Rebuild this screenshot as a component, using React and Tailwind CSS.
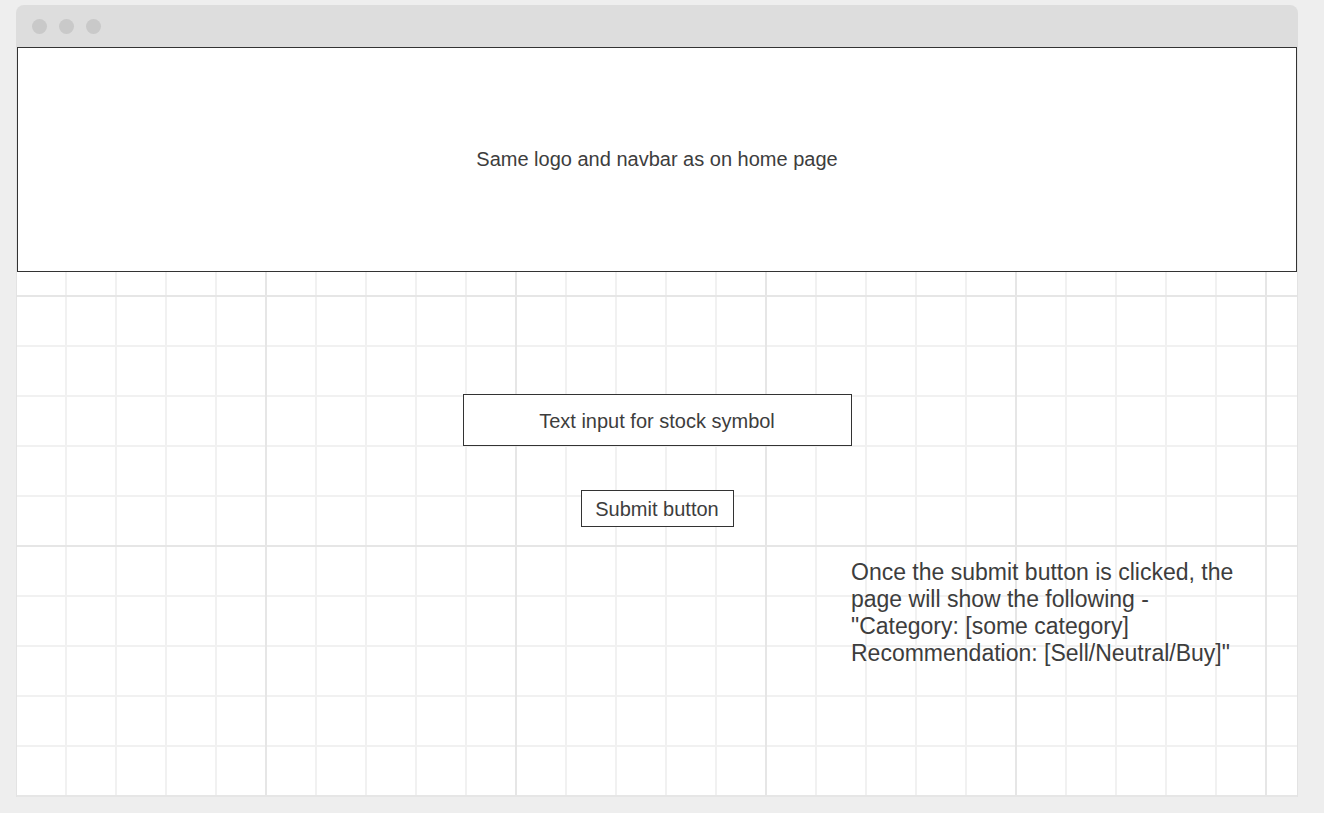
import React from "react";

const font = { fontFamily: '"Liberation Sans", Arial, sans-serif' };

export default function App() {
    return (
        <div className="min-h-[813px] w-full bg-[#eeeeee] pt-[5px] pl-[16px]" style={font}>
            <div className="w-[1282px] rounded-t-[8px] overflow-hidden">
                {/* title bar */}
                <div className="h-[42px] bg-[#dddddd] flex items-center gap-[12px] pl-[16px]">
                    <span className="w-[15px] h-[15px] rounded-full bg-[#c9c9c9]" />
                    <span className="w-[15px] h-[15px] rounded-full bg-[#c9c9c9]" />
                    <span className="w-[15px] h-[15px] rounded-full bg-[#c9c9c9]" />
                </div>

                {/* page canvas */}
                <div className="border-x border-[#e3e3e3] bg-white h-[750px] [background-image:linear-gradient(to_right,transparent_248px,#e6e6e6_248px,#e6e6e6_250px),linear-gradient(to_bottom,transparent_248px,#e6e6e6_248px,#e6e6e6_250px),linear-gradient(to_right,transparent_48px,#f1f1f1_48px,#f1f1f1_50px),linear-gradient(to_bottom,transparent_48px,#f1f1f1_48px,#f1f1f1_50px)] [background-size:250px_250px,250px_250px,50px_50px,50px_50px]">
                    <div className="h-[225px] bg-white border border-[#333333] flex items-center justify-center pb-px text-[20px] text-[#3d3d3d]">
                        Same logo and navbar as on home page
                    </div>

                    <div className="flex flex-col items-center pt-[122px] text-[#3d3d3d]">
                        <div className="w-[389px] h-[52px] border border-[#333333] bg-white flex items-center justify-center text-[20px] pt-px">
                            Text input for stock symbol
                        </div>
                        <div className="mt-[44px] w-[153px] h-[37px] border border-[#333333] bg-white flex items-center justify-center text-[20px] pt-px">
                            Submit button
                        </div>
                        <div className="self-start ml-[834px] mt-[32px] text-[23px] leading-[27px] whitespace-nowrap">
                            Once the submit button is clicked, the
                            <br />
                            page will show the following -
                            <br />
                            "Category: [some category]
                            <br />
                            Recommendation: [Sell/Neutral/Buy]"
                        </div>
                    </div>
                </div>
            </div>
        </div>
    );
}
